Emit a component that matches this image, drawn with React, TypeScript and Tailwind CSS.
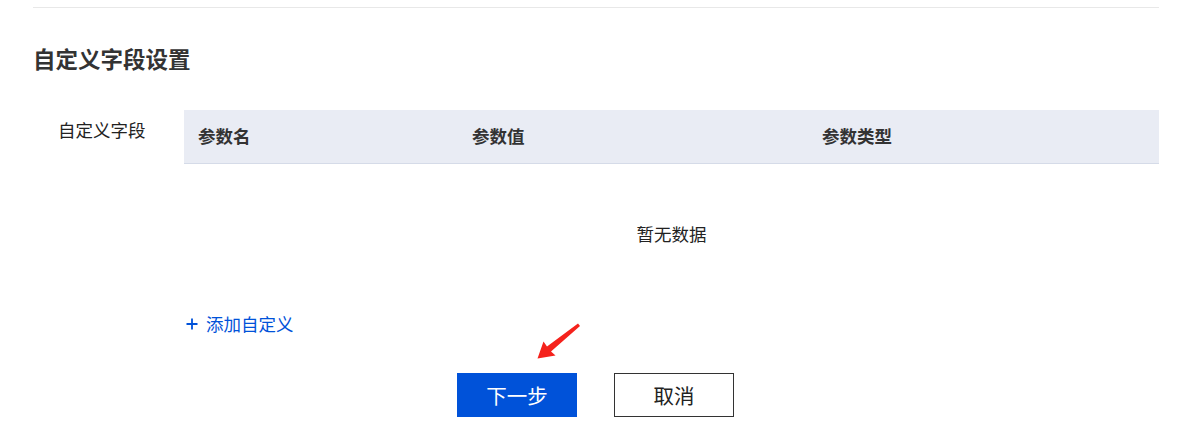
import React from "react";

export default function App() {
  const font = { fontFamily: '"Noto Sans CJK SC", "Noto Sans", sans-serif' };
  return (
    <div className="relative w-[1188px] h-[431px] bg-white overflow-hidden text-[#222]" style={font}>
      <div className="pl-[33px] pr-[29px]">
        <div className="mt-[7px] h-px bg-[#e8e8e8]" />
        <h2 className="mt-[35px] text-[22.5px] leading-[30px] font-bold text-[#333]">自定义字段设置</h2>
        <div className="mt-[37px] flex">
          <div className="w-[151px] shrink-0 pl-[25px] pt-[8px] text-[17.5px] leading-[24px]">自定义字段</div>
          <div className="flex-1">
            <div className="flex h-[54px] items-center bg-[#e9ecf4] border-b border-[#d5dbe8] text-[17.5px] font-bold text-[#333]">
              <div className="w-[274px] pl-[14px]">参数名</div>
              <div className="w-[350px] pl-[14px]">参数值</div>
              <div className="flex-1 pl-[14px]">参数类型</div>
            </div>
            <div className="h-[140px] flex items-center justify-center text-[17.5px] text-[#222]">暂无数据</div>
            <div className="mt-[8px] flex items-center h-[24px] text-[17.5px] text-[#0052d9]">
              <svg width="12" height="12" viewBox="0 0 12 12" className="ml-[2px] mr-[8px]">
                <path d="M6 0.5V11.5M0.5 6H11.5" stroke="#0052d9" strokeWidth="1.8" />
              </svg>
              <span>添加自定义</span>
            </div>
          </div>
        </div>
      </div>
      <div className="mt-[37px] flex justify-center gap-[37px] pl-[3px]">
        <button className="w-[120px] h-[44px] bg-[#0052d9] text-white text-[20.5px]">下一步</button>
        <button className="w-[120px] h-[44px] bg-white border border-[#333] text-[#222] text-[20.5px]">取消</button>
      </div>
      <svg className="absolute left-0 top-0 pointer-events-none" width="1188" height="431">
        <polygon points="580,326 578,323.5 547,346.5 543.5,341.5 537.5,358.5 555.5,355.5 551,351.5" fill="#f5221c" />
      </svg>
    </div>
  );
}
